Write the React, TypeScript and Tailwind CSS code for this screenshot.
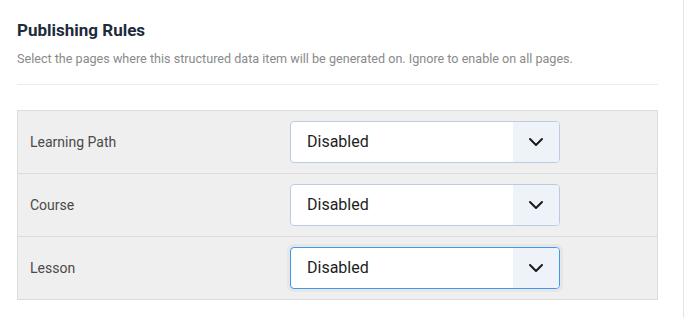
import React from 'react';

const rows = [
  { label: 'Learning Path', focused: false },
  { label: 'Course', focused: false },
  { label: 'Lesson', focused: true },
];

const Chevron: React.FC = () => (
  <svg width="16" height="10" viewBox="0 0 16 10" fill="none">
    <path d="M2 2l6 6 6-6" stroke="#1a1a1a" strokeWidth="2" strokeLinecap="round" strokeLinejoin="round" />
  </svg>
);

const Select: React.FC<{ focused: boolean }> = ({ focused }) => (
  <div
    className={
      'flex h-[42px] w-[270px] overflow-hidden rounded-[4px] border bg-white ' +
      (focused ? 'border-[#3d97f5] shadow-[0_0_0_3px_#e6e6e6]' : 'border-[#bccbe2]')
    }
  >
    <div className="flex flex-1 items-center pl-4 text-[16px] text-[#1e1e1e]">Disabled</div>
    <div className="flex w-[46px] items-center justify-center bg-[#eef3fa]">
      <Chevron />
    </div>
  </div>
);

export default function App() {
  return (
    <div className="min-h-[318px] w-full border-r border-[#e3e3e3] bg-white font-['Roboto',sans-serif]">
      <div className="w-[658px] pl-[17px] pt-[19px]">
        <h2 className="text-[17px] font-bold leading-[22px] text-[#1d2b3c]">Publishing Rules</h2>
        <p className="mt-[9px] text-[12.6px] leading-[18px] text-[#8a8a8a]">
          Select the pages where this structured data item will be generated on. Ignore to enable on all pages.
        </p>
        <div className="mt-[16px] border-t border-[#ececec]" />
        <div className="mt-[25px] border border-[#dcdcdc] bg-[#efefef]">
          {rows.map((r, i) => (
            <div
              key={r.label}
              className={'flex h-[62px] items-center ' + (i > 0 ? 'h-[63px] border-t border-[#dcdcdc]' : '')}
            >
              <div className="w-[272px] pl-[12px] text-[14px] text-[#4a4a4a]">{r.label}</div>
              <Select focused={r.focused} />
            </div>
          ))}
        </div>
      </div>
    </div>
  );
}
